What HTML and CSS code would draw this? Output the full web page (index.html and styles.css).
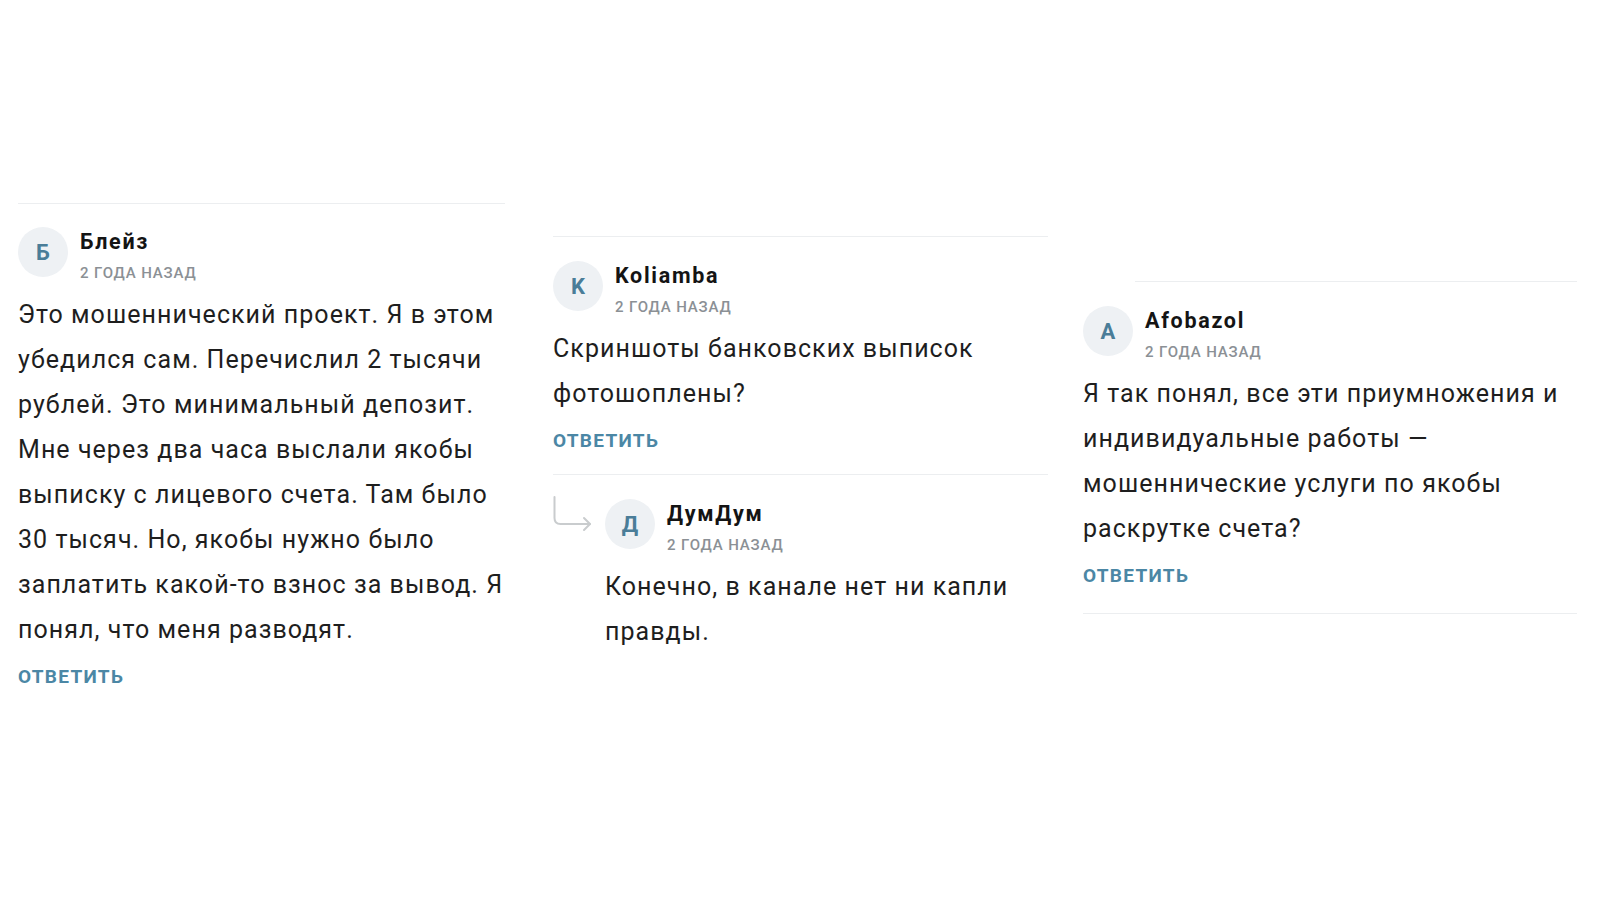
FILE: index.html
```html
<!DOCTYPE html>
<html lang="ru">
<head>
<meta charset="utf-8">
<title>Комментарии</title>
<link rel="stylesheet" href="styles.css">
</head>
<body>
<main class="board">
  <section class="col col-1">
    <article class="comment">
      <header class="head">
        <div class="avatar">Б</div>
        <div class="meta">
          <div class="name">Блейз</div>
          <div class="date">2 года назад</div>
        </div>
      </header>
      <p class="text">Это мошеннический проект. Я в этом убедился сам. Перечислил 2 тысячи рублей. Это минимальный депозит. Мне через два часа выслали якобы выписку с лицевого счета. Там было 30 тысяч. Но, якобы нужно было заплатить какой-то взнос за вывод. Я понял, что меня разводят.</p>
      <a class="reply" href="#">Ответить</a>
    </article>
  </section>

  <section class="col col-2">
    <article class="comment">
      <header class="head">
        <div class="avatar">K</div>
        <div class="meta">
          <div class="name">Koliamba</div>
          <div class="date">2 года назад</div>
        </div>
      </header>
      <p class="text">Скриншоты банковских выписок фотошоплены?</p>
      <a class="reply" href="#">Ответить</a>
    </article>
    <div class="thread">
      <svg class="thread-arrow" width="40" height="44" viewBox="0 0 40 44" aria-hidden="true">
        <path d="M1.5 1 V22 Q1.5 28 7.5 28 H37" fill="none" stroke="#c9ccce" stroke-width="2" stroke-linecap="round"/>
        <path d="M31 22 L37 28 L31 34" fill="none" stroke="#c9ccce" stroke-width="2" stroke-linecap="round" stroke-linejoin="round"/>
      </svg>
      <article class="comment comment-child">
        <header class="head">
          <div class="avatar">Д</div>
          <div class="meta">
            <div class="name">ДумДум</div>
            <div class="date">2 года назад</div>
          </div>
        </header>
        <p class="text">Конечно, в канале нет ни капли правды.</p>
      </article>
    </div>
  </section>

  <section class="col col-3">
    <article class="comment comment-short-top comment-closed">
      <header class="head">
        <div class="avatar">A</div>
        <div class="meta">
          <div class="name">Afobazol</div>
          <div class="date">2 года назад</div>
        </div>
      </header>
      <p class="text">Я так понял, все эти приумножения и индивидуальные работы — мошеннические услуги по якобы раскрутке счета?</p>
      <a class="reply" href="#">Ответить</a>
    </article>
  </section>
</main>
</body>
</html>
```

FILE: styles.css
```css
* { box-sizing: border-box; }

html, body {
  margin: 0;
  background: #ffffff;
}

body {
  font-family: Roboto, "Noto Sans", "Liberation Sans", sans-serif;
  color: #1b1b1b;
}

.board {
  display: flex;
  align-items: flex-start;
  padding-left: 18px;
  width: 1600px;
  height: 900px;
}

.col-1 { width: 487px; margin-top: 203px; }
.col-2 { width: 495px; margin-top: 236px; margin-left: 48px; }
.col-3 { width: 494px; margin-top: 281px; margin-left: 35px; }

.comment {
  position: relative;
  border-top: 1px solid #eceef0;
  padding-top: 23px;
  padding-bottom: 22px;
}

.col-2 .comment { padding-top: 24px; padding-bottom: 21px; }

.comment-short-top {
  border-top: none;
}
.comment-short-top::before {
  content: "";
  position: absolute;
  top: 0;
  left: 52px;
  right: 0;
  height: 1px;
  background: #eceef0;
}

.comment-closed {
  border-bottom: 1px solid #eceef0;
  padding-top: 25px;
  padding-bottom: 25px;
}

.head {
  display: flex;
  align-items: flex-start;
  gap: 12px;
}

.avatar {
  width: 50px;
  height: 50px;
  flex: none;
  border-radius: 50%;
  background: #eef1f4;
  color: #4a7d98;
  font-weight: 700;
  font-size: 22px;
  display: flex;
  align-items: center;
  justify-content: center;
}

.meta {
  margin-top: 3px;
}

.name {
  font-size: 21.5px;
  line-height: 24px;
  font-weight: 700;
  color: #141414;
  letter-spacing: 1.7px;
}

.date {
  margin-top: 10px;
  font-size: 15px;
  line-height: 18px;
  font-weight: 500;
  color: #8b9095;
  text-transform: uppercase;
  letter-spacing: 0.85px;
}

.text {
  margin: 10px -8px 0 0;
  font-size: 25px;
  line-height: 45px;
  color: #1e1e1e;
  letter-spacing: 1.05px;
}

.reply {
  display: block;
  margin-top: 13px;
  font-size: 19px;
  line-height: 24px;
  font-weight: 700;
  color: #4b87a5;
  text-transform: uppercase;
  letter-spacing: 1.3px;
  text-decoration: none;
}

.thread {
  display: flex;
  border-top: 1px solid #eceef0;
}

.thread-arrow {
  flex: none;
  margin-top: 21px;
  width: 40px;
  margin-right: 12px;
}

.col-2 .comment-child {
  border-top: none;
  padding-top: 24px;
  flex: 1;
}
```
